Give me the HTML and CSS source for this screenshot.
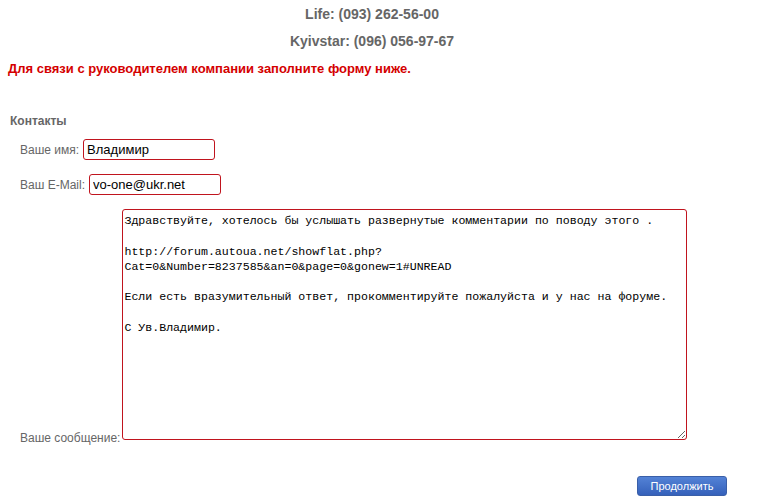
FILE: index.html
```html
<!DOCTYPE html>
<html lang="ru">
<head>
  <meta charset="UTF-8">
  <title>Контакты</title>
  <link rel="stylesheet" href="styles.css">
</head>
<body>
  <div class="page">
    <div class="phone">Life: (093) 262-56-00</div>
    <div class="phone">Kyivstar: (096) 056-97-67</div>
    <div class="notice">Для связи с руководителем компании заполните форму ниже.</div>

    <form class="contact-form" action="#" method="post">
      <div class="form-title">Контакты</div>
      <div class="form-row">
        <label for="name">Ваше имя:</label>
        <input type="text" id="name" class="field" value="Владимир">
      </div>
      <div class="form-row">
        <label for="email">Ваш E-Mail:</label>
        <input type="text" id="email" class="field" value="vo-one@ukr.net">
      </div>
      <div class="form-row msg-row">
        <label for="msg">Ваше сообщение:</label>
        <textarea id="msg" class="message" spellcheck="false">Здравствуйте, хотелось бы услышать развернутые комментарии по поводу этого .

http://forum.autoua.net/showflat.php?
Cat=0&amp;Number=8237585&amp;an=0&amp;page=0&amp;gonew=1#UNREAD

Если есть вразумительный ответ, прокомментируйте пожалуйста и у нас на форуме.

С Ув.Владимир.</textarea>
      </div>
      <div class="form-actions">
        <button type="button" class="submit-btn">Продолжить</button>
      </div>
    </form>
  </div>
</body>
</html>
```

FILE: styles.css
```css
/* Basic resets */
* { margin: 0; padding: 0; box-sizing: border-box; }
html, body { background: #fff; font-family: 'Liberation Sans', Arial, sans-serif; }

.page {
  width: 768px;
  padding: 1px 8px 0;
}
/* Phones on top */
.phone {
  height: 27px;
  line-height: 27px;
  padding-right: 24px;
  text-align: center;
  font-size: 14px;
  font-weight: bold;
  color: #666;
}
.notice {
  height: 27px;
  line-height: 27px;
  font-size: 13px;
  font-weight: bold;
  color: #d40000;
}
/* Form */
.contact-form {
  padding-top: 31px;
}
.form-title {
  padding-left: 2px;
  font-size: 12px;
  font-weight: bold;
  line-height: 16px;
  color: #666;
}
.form-row {
  display: flex;
  align-items: center;
  gap: 4px;
  padding-left: 12px;
  margin-top: 10px;
}
.form-row + .form-row { margin-top: 14px; }
.form-row label {
  font-size: 12px;
  color: #666;
}
.field {
  width: 132px;
  height: 21px;
  padding: 0 3px;
  border: 1px solid #c0141e;
  border-radius: 3px;
  font-family: 'Liberation Sans', Arial, sans-serif;
  font-size: 13px;
  color: #000;
  outline: none;
}
.msg-row {
  align-items: flex-end;
  gap: 2px;
}
.msg-row label {
  margin-bottom: -5px;
}
.message {
  width: 565px;
  height: 231px;
  padding: 3px 1px;
  border: 1px solid #c0141e;
  border-radius: 3px;
  font-family: 'Liberation Mono', 'Courier New', monospace;
  font-size: 11.6px;
  line-height: 15.3px;
  color: #000;
  resize: both;
  overflow: hidden;
  outline: none;
}
.form-actions {
  display: flex;
  justify-content: flex-end;
  padding-right: 33px;
  margin-top: 36px;
}
.submit-btn {
  width: 90px;
  height: 20px;
  border: 1px solid #3a5fa8;
  border-radius: 3px;
  background: linear-gradient(#5382d6, #3561bb);
  color: #fff;
  font-family: 'Liberation Sans', Arial, sans-serif;
  font-size: 11px;
  cursor: pointer;
}
```
